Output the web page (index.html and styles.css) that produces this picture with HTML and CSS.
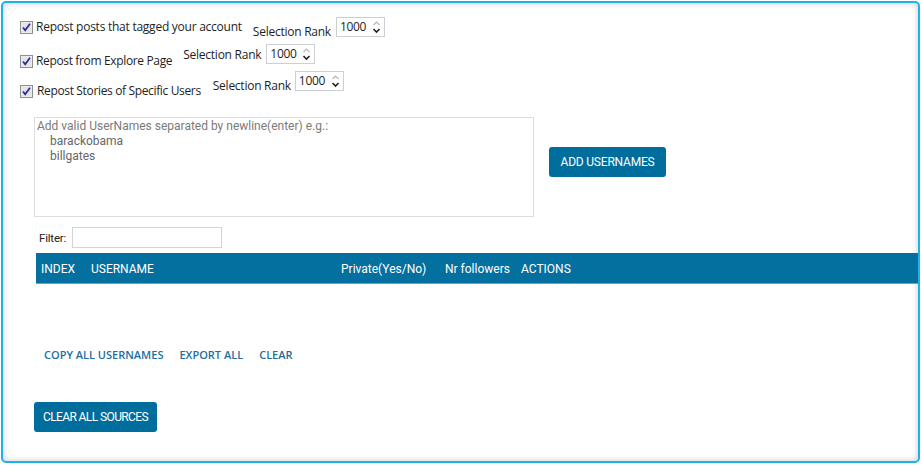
FILE: index.html
```html
<!DOCTYPE html>
<html>
<head>
<meta charset="utf-8">
<link rel="stylesheet" href="styles.css">
</head>
<body>
<div class="frame">
  <div class="opt-row row1">
    <span class="cb cb1"><svg width="13" height="13" viewBox="0 0 13 13"><rect x="0.5" y="0.5" width="12" height="12" fill="#f2f2f2" stroke="#8e8f8f"/><rect x="1.5" y="1.5" width="10" height="10" fill="#e4e4ea"/><path d="M3 6.5 L5.2 9.3 L10 2.8" fill="none" stroke="#2e2e8a" stroke-width="1.8"/></svg></span>
    <span class="opt-label l1">Repost posts that tagged your account</span>
    <span class="rank-label r1">Selection Rank</span>
    <span class="spin s1"><span class="val">1000</span><span class="arrows"><svg width="9" height="14" viewBox="0 0 9 14"><path d="M1.5 5 L4.5 2 L7.5 5" fill="none" stroke="#b8b8b8" stroke-width="1.2"/><path d="M1.5 9 L4.5 12 L7.5 9" fill="none" stroke="#222" stroke-width="1.6"/></svg></span></span>
  </div>
  <div class="opt-row row2">
    <span class="cb cb2"><svg width="13" height="13" viewBox="0 0 13 13"><rect x="0.5" y="0.5" width="12" height="12" fill="#f2f2f2" stroke="#8e8f8f"/><rect x="1.5" y="1.5" width="10" height="10" fill="#e4e4ea"/><path d="M3 6.5 L5.2 9.3 L10 2.8" fill="none" stroke="#2e2e8a" stroke-width="1.8"/></svg></span>
    <span class="opt-label l2">Repost from Explore Page</span>
    <span class="rank-label r2">Selection Rank</span>
    <span class="spin s2"><span class="val">1000</span><span class="arrows"><svg width="9" height="14" viewBox="0 0 9 14"><path d="M1.5 5 L4.5 2 L7.5 5" fill="none" stroke="#b8b8b8" stroke-width="1.2"/><path d="M1.5 9 L4.5 12 L7.5 9" fill="none" stroke="#222" stroke-width="1.6"/></svg></span></span>
  </div>
  <div class="opt-row row3">
    <span class="cb cb3"><svg width="13" height="13" viewBox="0 0 13 13"><rect x="0.5" y="0.5" width="12" height="12" fill="#f2f2f2" stroke="#8e8f8f"/><rect x="1.5" y="1.5" width="10" height="10" fill="#e4e4ea"/><path d="M3 6.5 L5.2 9.3 L10 2.8" fill="none" stroke="#2e2e8a" stroke-width="1.8"/></svg></span>
    <span class="opt-label l3">Repost Stories of Specific Users</span>
    <span class="rank-label r3">Selection Rank</span>
    <span class="spin s3"><span class="val">1000</span><span class="arrows"><svg width="9" height="14" viewBox="0 0 9 14"><path d="M1.5 5 L4.5 2 L7.5 5" fill="none" stroke="#b8b8b8" stroke-width="1.2"/><path d="M1.5 9 L4.5 12 L7.5 9" fill="none" stroke="#222" stroke-width="1.6"/></svg></span></span>
  </div>

  <div class="users-row">
    <div class="userbox">
      <div class="ph">Add valid UserNames separated by newline(enter) e.g.:</div>
      <div class="ph ind">barackobama</div>
      <div class="ph ind">billgates</div>
    </div>
    <button class="btn add-btn">ADD USERNAMES</button>
  </div>

  <div class="filter-row">
    <span class="filter-label">Filter:</span>
    <span class="filter-input"></span>
  </div>

  <div class="thead">
    <span class="th th-index">INDEX</span>
    <span class="th th-user">USERNAME</span>
    <span class="th th-priv">Private(Yes/No)</span>
    <span class="th th-foll">Nr followers</span>
    <span class="th th-act">ACTIONS</span>
  </div>

  <div class="links">
    <a class="link">COPY ALL USERNAMES</a>
    <a class="link">EXPORT ALL</a>
    <a class="link">CLEAR</a>
  </div>

  <div class="bottom">
    <button class="btn clear-btn">CLEAR ALL SOURCES</button>
  </div>
</div>
</body>
</html>
```

FILE: styles.css
```css
html, body {
  margin: 0;
  padding: 0;
  background: #ffffff;
}
body {
  font-family: "Open Sans", "Noto Sans", sans-serif;
  color: #1e1e1e;
}
.frame {
  box-sizing: border-box;
  margin: 1px 0 0 1px;
  width: 919px;
  height: 462px;
  border: 2px solid #1db2ea;
  border-radius: 5px;
  box-shadow: inset 0 0 6px rgba(0, 0, 0, 0.22);
  padding: 14px 0 0 17px;
  overflow: hidden;
  background: #ffffff;
}
.opt-row {
  display: flex;
  align-items: flex-start;
  font-size: 12px;
  line-height: 16px;
}
.row1 { height: 27px; }
.row2 { height: 27px; }
.row3 { height: 27px; }
.cb { display: block; width: 13px; height: 13px; }
.cb svg { display: block; }
.opt-label { margin-left: 3px; letter-spacing: -0.25px; }
.rank-label { letter-spacing: -0.25px; }
.cb1 { margin-top: 4px; }
.l1 { margin-top: 2px; }
.r1 { margin-top: 7px; margin-left: 11px; }
.s1 { margin-left: 5px; }
.cb2 { margin-top: 11px; }
.l2 { margin-top: 9px; letter-spacing: -0.35px; }
.r2 { margin-top: 3px; margin-left: 11px; }
.s2 { margin-left: 5px; }
.cb3 { margin-top: 14px; }
.l3 { margin-top: 12px; margin-left: 4px; letter-spacing: -0.35px; }
.r3 { margin-top: 7px; margin-left: 12px; }
.s3 { margin-left: 4px; }
.spin {
  box-sizing: border-box;
  width: 49px;
  height: 20px;
  border: 1px solid #cbd0d6;
  display: flex;
  align-items: center;
  justify-content: space-between;
  padding: 0 3px 0 3px;
  font-size: 12px;
  background: #fff;
}
.spin .val { letter-spacing: -0.3px; }
.spin .arrows svg { display: block; }

.users-row {
  display: flex;
  align-items: flex-start;
  margin: 19px 0 0 14px;
}
.userbox {
  box-sizing: border-box;
  width: 500px;
  height: 100px;
  border: 1px solid #dedede;
  padding: 1px 2px;
  font-family: Roboto, "Noto Sans", sans-serif;
  font-size: 12px;
  line-height: 15px;
  letter-spacing: 0;
}
.ph { color: #7a7a7a; }
.ph.ind { padding-left: 13px; color: #666; }
.btn {
  font-family: Roboto, "Noto Sans", sans-serif;
  font-size: 12px;
  font-weight: 400;
  letter-spacing: -0.2px;
  color: #ffffff;
  background: #006e9c;
  border: none;
  border-radius: 3px;
  padding: 0;
  cursor: pointer;
}
.add-btn {
  margin: 30px 0 0 15px;
  width: 117px;
  height: 30px;
}
.filter-row {
  display: flex;
  align-items: center;
  margin: 10px 0 0 19px;
  height: 21px;
}
.filter-label {
  font-family: Roboto, "Noto Sans", sans-serif;
  font-size: 11.5px;
  letter-spacing: -0.2px;
  color: #222;
}
.filter-input {
  box-sizing: border-box;
  width: 150px;
  height: 21px;
  border: 1px solid #d4d4d4;
  margin-left: 6px;
}
.thead {
  display: flex;
  align-items: center;
  box-sizing: border-box;
  margin: 5px 0 0 16px;
  height: 31px;
  background: #04709f;
  border-bottom: 1px solid #5aa6cc;
  color: #ffffff;
  font-family: Roboto, "Noto Sans", sans-serif;
  font-size: 12px;
  font-weight: 400;
  letter-spacing: 0;
  padding: 1px 0 0 5px;
}
.th { white-space: nowrap; }
.th-index { width: 50px; }
.th-user { width: 250px; }
.th-priv { width: 104px; }
.th-foll { width: 76px; }
.links {
  display: flex;
  gap: 16px;
  margin: 62px 0 0 24px;
  height: 16px;
  align-items: center;
}
.link {
  font-family: "Open Sans", "Noto Sans", sans-serif;
  font-size: 11px;
  font-weight: 600;
  color: #1d6f9e;
  letter-spacing: 0;
  text-decoration: none;
}
.bottom {
  margin: 40px 0 0 14px;
}
.clear-btn {
  width: 123px;
  height: 30px;
  letter-spacing: -0.6px;
}
```
